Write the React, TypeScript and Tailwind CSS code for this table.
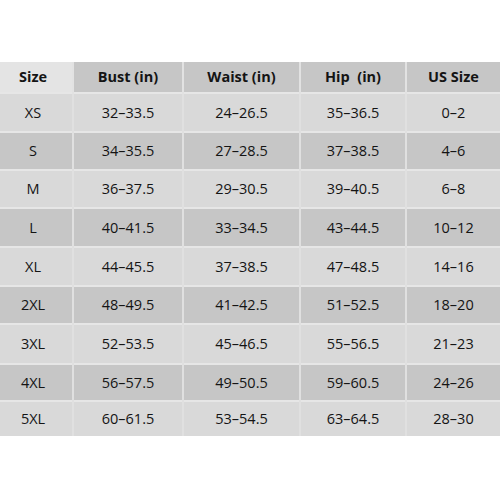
import React from "react";

const headers = ["Size", "Bust (in)", "Waist (in)", "Hip  (in)", "US Size"];

const rows: string[][] = [
  ["XS", "32–33.5", "24–26.5", "35–36.5", "0–2"],
  ["S", "34–35.5", "27–28.5", "37–38.5", "4–6"],
  ["M", "36–37.5", "29–30.5", "39–40.5", "6–8"],
  ["L", "40–41.5", "33–34.5", "43–44.5", "10–12"],
  ["XL", "44–45.5", "37–38.5", "47–48.5", "14–16"],
  ["2XL", "48–49.5", "41–42.5", "51–52.5", "18–20"],
  ["3XL", "52–53.5", "45–46.5", "55–56.5", "21–23"],
  ["4XL", "56–57.5", "49–50.5", "59–60.5", "24–26"],
  ["5XL", "60–61.5", "53–54.5", "63–64.5", "28–30"],
];

const heights = ["h-[39px]", "h-[38px]", "h-[38px]", "h-[39px]", "h-[39px]", "h-[38px]", "h-[40px]", "h-[37px]", "h-[35px]"];

const widths = ["w-[73px]", "w-[110px]", "w-[117px]", "w-[106px]", "w-[94px]"];

export default function App() {
  return (
    <div
      className="w-[500px] h-[500px] bg-white pt-[62px] text-[#141414]"
      style={{ fontFamily: '"Open Sans", "Noto Sans", sans-serif' }}
    >
      <table className="w-[500px] table-fixed border-collapse text-[14.5px]">
        <thead>
          <tr className="h-[31px]">
            {headers.map((h, i) => (
              <th
                key={h}
                className={`${widths[i]} font-bold whitespace-pre border-x-2 border-[#e2e2e2] first:border-l-0 last:border-r-0 ${
                  i === 0 ? "bg-[#e4e4e4] pr-[6px]" : "bg-[#c6c6c6]"
                }`}
              >
                {h}
              </th>
            ))}
          </tr>
        </thead>
        <tbody>
          {rows.map((r, ri) => (
            <tr
              key={r[0]}
              className={`${heights[ri]} border-t-2 border-[#e6e6e6] ${
                ri % 2 === 0 ? "bg-[#d9d9d9]" : "bg-[#c6c6c6]"
              }`}
            >
              {r.map((c, ci) => (
                <td
                  key={ci}
                  className={`text-center p-0 border-x-2 border-[#e0e0e0] first:border-l-0 last:border-r-0 ${
                    ci === 0 ? "pr-[6px]" : ""
                  } ${ri % 2 === 0 ? "border-[#d9d9d9]" : ""}`}
                >
                  {c}
                </td>
              ))}
            </tr>
          ))}
        </tbody>
      </table>
    </div>
  );
}
